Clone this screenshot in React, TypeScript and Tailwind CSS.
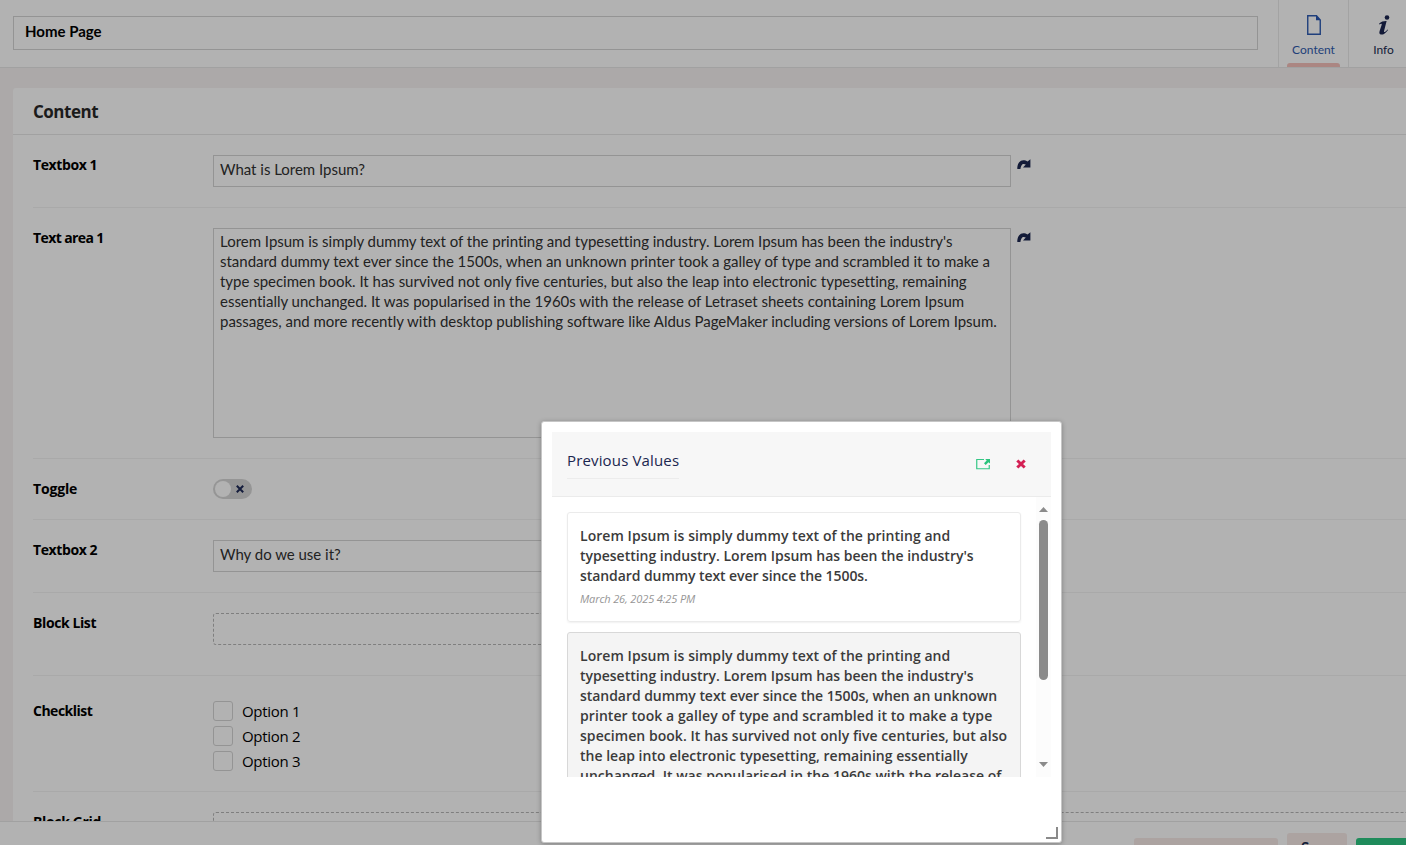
import type { ReactNode } from "react";

const DASHED = "border border-dashed border-[#7f7f7f] rounded-[3px]";

function RevertIcon() {
  return (
    <svg className="mt-1 ml-1.5 h-3 w-[14px] shrink-0" viewBox="0 0 14 12" fill="#131b38">
      <path d="M0.3 10V8.6C0.8 4 3 1.2 6.2 1.2C8 1.2 9.3 1.7 10.6 2.6L13.4 0.3V8.6H6L8.8 5.6C7 4.6 5.4 5 4.5 6.4C4 7.2 3.6 8.6 3.4 10Z" />
    </svg>
  );
}

type RowProps = { label: string; children: ReactNode; labelClass?: string };

function Row({ label, children, labelClass = "tracking-[-0.4px]" }: RowProps) {
  return (
    <div className="flex border-b border-[#a9a9a9] py-5">
      <div className={`w-[180px] shrink-0 text-[14px] leading-5 font-bold text-black ${labelClass}`}>{label}</div>
      {children}
    </div>
  );
}

function TextInput({ value }: { value: string }) {
  return (
    <div className="h-8 w-[798px] shrink-0 border border-[#949494] px-1.5 pt-[3px] font-['Lato',sans-serif] text-[15px] leading-5 tracking-[-0.02px] text-[#222222]">
      {value}
    </div>
  );
}

function Option({ label }: { label: string }) {
  return (
    <div className="flex h-[25px] items-end">
      <span className="h-5 w-5 rounded-[3px] border border-[#949494]" />
      <span className="ml-[9px] text-[15px] leading-5 tracking-[-0.3px] text-black">{label}</span>
    </div>
  );
}

const areaLines = [
  "Lorem Ipsum is simply dummy text of the printing and typesetting industry. Lorem Ipsum has been the industry's",
  "standard dummy text ever since the 1500s, when an unknown printer took a galley of type and scrambled it to make a",
  "type specimen book. It has survived not only five centuries, but also the leap into electronic typesetting, remaining",
  "essentially unchanged. It was popularised in the 1960s with the release of Letraset sheets containing Lorem Ipsum",
  "passages, and more recently with desktop publishing software like Aldus PageMaker including versions of Lorem Ipsum.",
];

type Line = [text: string, tracking: string];

const firstLines: Line[] = [
  ["Lorem Ipsum is simply dummy text of the printing and", "tracking-[0.055px]"],
  ["typesetting industry. Lorem Ipsum has been the industry's", "tracking-[-0.01px]"],
  ["standard dummy text ever since the 1500s.", "tracking-[-0.075px]"],
];

const secondLines: Line[] = [
  ["Lorem Ipsum is simply dummy text of the printing and", "tracking-[0.055px]"],
  ["typesetting industry. Lorem Ipsum has been the industry's", "tracking-[-0.01px]"],
  ["standard dummy text ever since the 1500s, when an unknown", "tracking-[-0.045px]"],
  ["printer took a galley of type and scrambled it to make a type", "tracking-[0.075px]"],
  ["specimen book. It has survived not only five centuries, but also", "tracking-[0.055px]"],
  ["the leap into electronic typesetting, remaining essentially", "tracking-[0.005px]"],
  ["unchanged. It was popularised in the 1960s with the release of", "tracking-[0.005px]"],
];

function Lines({ lines }: { lines: Line[] }) {
  return (
    <div className="text-[14px] leading-5 font-semibold whitespace-nowrap text-[#3b3b3b]">
      {lines.map(([text, tracking]) => (
        <div key={text} className={tracking}>
          {text}
        </div>
      ))}
    </div>
  );
}

function Header() {
  return (
    <header className="flex h-[68px] shrink-0 border-b border-[#a1a1a1] bg-[#b2b2b2] font-['Lato',sans-serif]">
      <div className="mt-4 ml-[13px] h-[34px] w-[1245px] shrink-0 border border-[#949494] pt-1 pl-[11px] text-[15px] leading-5 font-bold text-black">
        Home Page
      </div>
      <div className="ml-5 flex w-[71px] shrink-0 flex-col items-center border-x border-[#a3a3a3]">
        <svg className="mt-[15px] h-5 w-[14px]" viewBox="0 0 14 20">
          <path d="M.75.75H9.5L13.25 5V19.25H.75Z" fill="none" stroke="#1f3f7c" strokeWidth="1.4" />
          <path d="M9 0.5L13.6 5.2H9Z" fill="#1b3b7d" />
        </svg>
        <span className="mt-[7px] text-[12px] leading-4 text-[#1e3f79]">Content</span>
        <span className="mt-[5px] h-1 w-[53px] rounded-t-[3px] bg-[#ab8682]" />
      </div>
      <div className="flex w-[69px] shrink-0 flex-col items-center">
        <svg className="mt-[15px] h-5 w-3" viewBox="0 0 12 20" fill="#131a38">
          <circle cx="9" cy="2.5" r="2.3" />
          <path d="M1 8.7C3 6.7 6 6 8.6 6.1L6 16.2C5.7 17.7 7.2 17.2 9.5 14.4L10 14.9C7.5 18.5 4.8 20 2.8 19.5C1 19 1.2 17.5 1.7 15.8L3.7 9.7C4 8.5 2.8 8.4 1.4 9.5Z" />
        </svg>
        <span className="mt-[7px] text-[12px] leading-4 text-[#131b38]">Info</span>
      </div>
    </header>
  );
}

function Modal() {
  return (
    <section className="absolute top-[421px] left-[541px] flex h-[422px] w-[521px] flex-col rounded-[3px] border border-[#c6c6c6] bg-white p-2.5 shadow-[0_1px_5px_rgba(0,0,0,0.28)]">
      <div className="flex h-[65px] w-[499px] shrink-0 border-b border-[#ebebeb] bg-[#f7f7f7] pl-[15px]">
        <h2 className="mt-[18px] h-[29px] w-[112px] border-b border-[#ececec] text-[15px] leading-5 font-medium tracking-[0.15px] whitespace-nowrap text-[#1b264f]">
          Previous Values
        </h2>
        <svg className="mt-[26px] ml-[297px] h-3 w-[14px]" viewBox="0 0 14 12">
          <path d="M8 1.5H.75V10.75H13.25V7" fill="none" stroke="#35c786" strokeWidth="1.2" />
          <path d="M9.2 1H14V5.6L12.4 4.2L9.7 6.9L8 5.2L10.7 2.5Z" fill="#2bc37c" />
        </svg>
        <svg className="mt-[27px] ml-[26px] h-[10px] w-[10px]" viewBox="0 0 10 10">
          <path d="M1.3 1.5L8.7 8.5M8.7 1.5L1.3 8.5" stroke="#d42054" strokeWidth="3" />
        </svg>
      </div>
      <div className="flex h-[280px] shrink-0 overflow-hidden">
        <div className="w-[484px] shrink-0 pt-[15px] pl-[15px]">
          <article className="h-[110px] w-[454px] rounded-[3px] border border-[#ebebeb] px-3 pt-[13px] shadow-[0_1px_2px_rgba(0,0,0,0.06)]">
            <Lines lines={firstLines} />
            <p className="mt-[5px] text-[11px] leading-4 tracking-[-0.13px] text-[#969696] italic">March 26, 2025 4:25 PM</p>
          </article>
          <article className="mt-[10px] h-[240px] w-[454px] rounded-[3px] border border-[#d8d8d8] bg-[#f4f4f4] px-3 pt-[13px]">
            <Lines lines={secondLines} />
          </article>
        </div>
        <div className="flex w-[15px] shrink-0 flex-col items-center bg-[#fcfcfc]">
          <svg className="mt-[10px] h-[5px] w-[9px]" viewBox="0 0 9 5" fill="#8b8b8b">
            <path d="M0 5L4.5 0L9 5Z" />
          </svg>
          <span className="mt-2 h-[160px] w-[9px] rounded-full bg-[#8b8b8b]" />
          <svg className="mt-[82px] h-[5px] w-[9px]" viewBox="0 0 9 5" fill="#8b8b8b">
            <path d="M0 0L4.5 5L9 0Z" />
          </svg>
        </div>
      </div>
      <span className="absolute right-[3px] bottom-[3px] h-3 w-3 border-r-2 border-b-2 border-[#8a8a8a]" />
    </section>
  );
}

export default function App() {
  return (
    <div className="relative flex h-[845px] w-[1406px] flex-col overflow-hidden bg-[#aca9a9] font-['Open_Sans',sans-serif]">
      <Header />
      <main className="mt-5 ml-[13px] h-[733px] shrink-0 overflow-hidden rounded-tl-[3px] bg-[#b2b2b2]">
        <div className="h-[47px] border-b border-[#a1a1a1] pt-[13px] pl-5 text-[17px] leading-[22px] font-bold tracking-[-0.5px] text-[#1b1b1b]">
          Content
        </div>
        <div className="pl-5">
          <Row label="Textbox 1">
            <TextInput value="What is Lorem Ipsum?" />
            <RevertIcon />
          </Row>
          <Row label="Text area 1" labelClass="tracking-[-0.6px]">
            <div className="h-[210px] w-[798px] shrink-0 border border-[#949494] px-1.5 pt-[2px] font-['Lato',sans-serif] text-[15px] leading-5 tracking-[-0.017px] whitespace-nowrap text-[#222222] [font-variant-ligatures:common-ligatures]">
              {areaLines.map((line) => (
                <div key={line}>{line}</div>
              ))}
            </div>
            <RevertIcon />
          </Row>
          <Row label="Toggle" labelClass="tracking-[-0.15px]">
            <div className="flex h-5 w-[39px] items-center rounded-full bg-[#959595] pl-0.5">
              <span className="h-4 w-4 rounded-full bg-[#b2b2b2]" />
              <svg className="ml-[5px] h-2 w-2" viewBox="0 0 8 8">
                <path d="M.8.8L7.2 7.2M7.2.8L.8 7.2" stroke="#141c3c" strokeWidth="2" />
              </svg>
            </div>
          </Row>
          <Row label="Textbox 2">
            <TextInput value="Why do we use it?" />
          </Row>
          <Row label="Block List">
            <div className="h-[42px] flex-1">
              <div className={`h-8 w-[798px] ${DASHED}`} />
            </div>
          </Row>
          <Row label="Checklist" labelClass="pt-[5px] tracking-[-0.5px]">
            <div>
              <Option label="Option 1" />
              <Option label="Option 2" />
              <Option label="Option 3" />
            </div>
          </Row>
          <Row label="Block Grid" labelClass="tracking-[-0.35px]">
            <div className={`h-10 w-[1250px] shrink-0 ${DASHED}`} />
          </Row>
        </div>
      </main>
      <footer className="flex h-6 shrink-0 items-start overflow-hidden border-t border-[#a1a1a1] bg-[#b2b2b2] pl-[1134px]">
        <div className="mt-4 h-8 w-36 shrink-0 rounded-[3px] bg-[#aca3a1]" />
        <div className="mt-[11px] ml-[9px] h-8 w-[60px] shrink-0 rounded-[3px] bg-[#aca3a1] pt-1 pl-[14px] font-['Lato',sans-serif] text-[15px] leading-5 font-bold text-[#131b38]">
          Save
        </div>
        <div className="mt-4 ml-[9px] h-8 w-36 shrink-0 rounded-[3px] bg-[#1f8b5b]" />
      </footer>
      <Modal />
    </div>
  );
}
